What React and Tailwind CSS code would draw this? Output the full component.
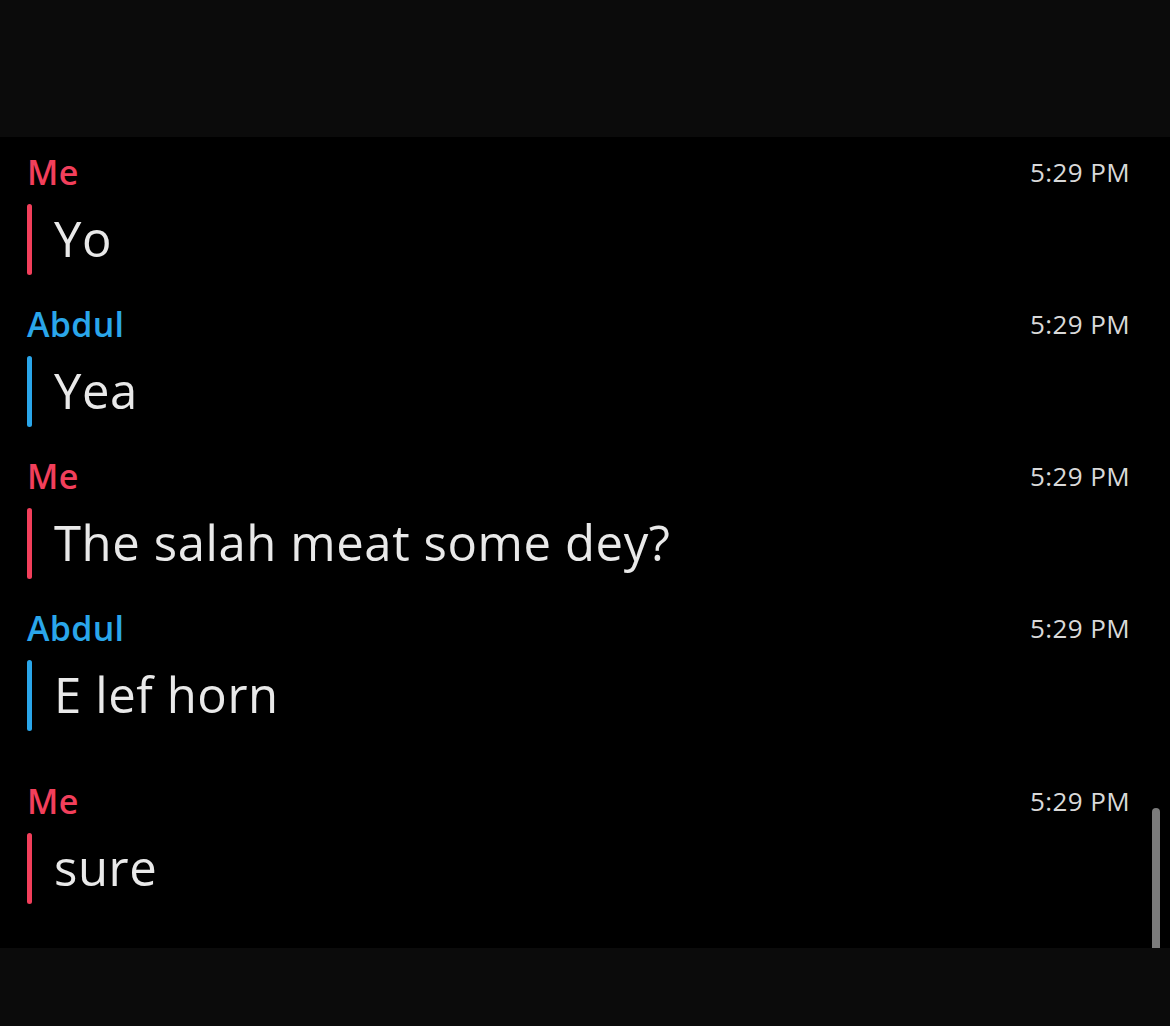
const messages = [
  { from: 'Me', text: 'Yo' },
  { from: 'Abdul', text: 'Yea' },
  { from: 'Me', text: 'The salah meat some dey?' },
  { from: 'Abdul', text: 'E lef horn' },
  { from: 'Me', text: 'sure', gap: true },
];

function Message({ from, text, gap }) {
  const me = from === 'Me';
  return (
    <div className={gap ? 'mt-[53px]' : 'mt-[32px] first:mt-0'}>
      <div className="flex items-center justify-between h-[34px]">
        <span className={`text-[34px] font-semibold tracking-[0.3px] ${me ? 'text-[#f23f5b]' : 'text-[#2aa6ea]'}`}>{from}</span>
        <span className="text-[26px] text-[#d9d9d9] tracking-[0.4px]">5:29 PM</span>
      </div>
      <div className="flex items-center h-[71px] mt-[15px]">
        <div className={`w-[5px] h-full rounded-full ${me ? 'bg-[#f23f5b]' : 'bg-[#2aa6ea]'}`} />
        <span className="ml-[22px] text-[49px] text-[#e9e9e9] tracking-[0.6px] -translate-y-[1px]">{text}</span>
      </div>
    </div>
  );
}

export default function App() {
  return (
    <div className="w-[1170px] h-[1026px] flex flex-col bg-[#0b0b0b]" style={{ fontFamily: '"Open Sans", "Noto Sans", sans-serif' }}>
      <div className="h-[137px] bg-[#0b0b0b]" />
      <div className="relative h-[811px] bg-black pt-[18px] pl-[27px] pr-[40px]">
        {messages.map((m, i) => (
          <Message key={i} {...m} />
        ))}
        <div className="absolute right-[10px] bottom-0 w-[8px] h-[140px] rounded-t-full bg-[#7b7b7b]" />
      </div>
      <div className="flex-1 bg-[#0b0b0b]" />
    </div>
  );
}
